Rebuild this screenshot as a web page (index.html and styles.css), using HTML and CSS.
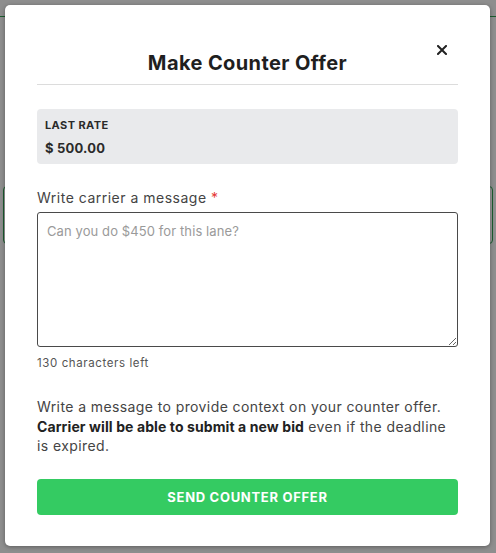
FILE: index.html
```html
<!DOCTYPE html>
<html>
<head>
<meta charset="utf-8">
<link rel="stylesheet" href="styles.css">
</head>
<body>
<div class="page">
  <div class="page-bar"></div>
  <div class="page-card"></div>
</div>
<div class="overlay">
  <div class="modal">
    <button class="close" aria-label="Close">
      <svg width="10" height="10" viewBox="0 0 10 10"><path d="M1 1 L9 9 M9 1 L1 9" stroke="#222" stroke-width="2" stroke-linecap="square"/></svg>
    </button>
    <div class="modal-header">
      <h2 class="title">Make Counter Offer</h2>
    </div>
    <div class="rate-box">
      <div class="rate-label">LAST RATE</div>
      <div class="rate-value">$ 500.00</div>
    </div>
    <label class="field-label">Write carrier a message <span class="req">*</span></label>
    <textarea class="message" placeholder="Can you do $450 for this lane?"></textarea>
    <div class="chars">130 characters left</div>
    <p class="info">Write a message to provide context on your counter offer. <b>Carrier will be able to submit a new bid</b> even if the deadline is expired.</p>
    <button class="submit">SEND COUNTER OFFER</button>
  </div>
</div>
</body>
</html>
```
FILE: styles.css
```css
html, body {
  margin: 0;
  padding: 0;
  width: 496px;
  height: 553px;
  overflow: hidden;
  font-family: "Inter", "DejaVu Sans", sans-serif;
}
.page {
  position: relative;
  width: 496px;
  height: 553px;
  background: #f4f4f4;
}
.page-bar {
  position: absolute;
  left: 0; right: 0; top: 16px;
  height: 0;
  border-top: 1px solid #2e9e4e;
}
.page-card {
  position: absolute;
  left: 3px; right: 3px; top: 186px;
  height: 56px;
  border: 1px solid #2e9e4e;
  border-radius: 4px;
  background: #fff;
}
.overlay {
  position: absolute;
  inset: 0;
  background: rgba(0,0,0,0.42);
}
.modal {
  position: absolute;
  left: 5px; top: 5px;
  width: 485px;
  height: 541px;
  box-sizing: border-box;
  background: #fff;
  border-radius: 5px;
  box-shadow: 0 1px 4px rgba(0,0,0,0.35);
  padding: 0 32px 31px;
  display: flex;
  flex-direction: column;
}
.close {
  position: absolute;
  right: 40px;
  top: 37px;
  width: 16px;
  height: 16px;
  padding: 0;
  border: 0;
  background: none;
  display: flex;
  align-items: center;
  justify-content: center;
}
.modal-header {
  padding: 44px 0 7px;
  border-bottom: 1px solid #dcdcdc;
  text-align: center;
}
.title {
  margin: 0;
  font-size: 20px;
  line-height: 28px;
  font-weight: 700;
  letter-spacing: 0.4px;
  color: #1f1f1f;
}
.rate-box {
  margin-top: 24px;
  background: #e9eaec;
  border-radius: 4px;
  padding: 8px 8px 6px;
  display: flex;
  flex-direction: column;
  gap: 5px;
}
.rate-label {
  font-size: 11px;
  line-height: 16px;
  font-weight: 700;
  letter-spacing: 0.4px;
  color: #2a2a2a;
}
.rate-value {
  font-size: 13px;
  line-height: 20px;
  font-weight: 700;
  letter-spacing: 0.2px;
  color: #2a2a2a;
}
.field-label {
  margin-top: 24px;
  font-size: 14px;
  line-height: 20px;
  letter-spacing: 0.5px;
  color: #444;
}
.req { color: #e53935; }
.message {
  margin-top: 4px;
  height: 135px;
  box-sizing: border-box;
  border: 1px solid #4a4a4a;
  border-radius: 3px;
  padding: 8px 9px;
  font-family: inherit;
  font-size: 13px;
  line-height: 20px;
  letter-spacing: 0.1px;
  color: #333;
  resize: vertical;
}
.message::placeholder { color: #9a9a9a; }
.chars {
  margin-top: 8px;
  font-size: 11.5px;
  line-height: 16px;
  letter-spacing: 0.6px;
  color: #555;
}
.info {
  margin: 26px 0 0;
  font-size: 14px;
  line-height: 19.5px;
  letter-spacing: 0.4px;
  color: #444;
}
.info b { color: #222; font-weight: 700; letter-spacing: 0.1px; }
.submit {
  margin-top: auto;
  height: 36px;
  border: 0;
  border-radius: 4px;
  background: #34cb62;
  color: #fff;
  font-family: inherit;
  font-size: 13px;
  font-weight: 700;
  letter-spacing: 0.7px;
}
```
